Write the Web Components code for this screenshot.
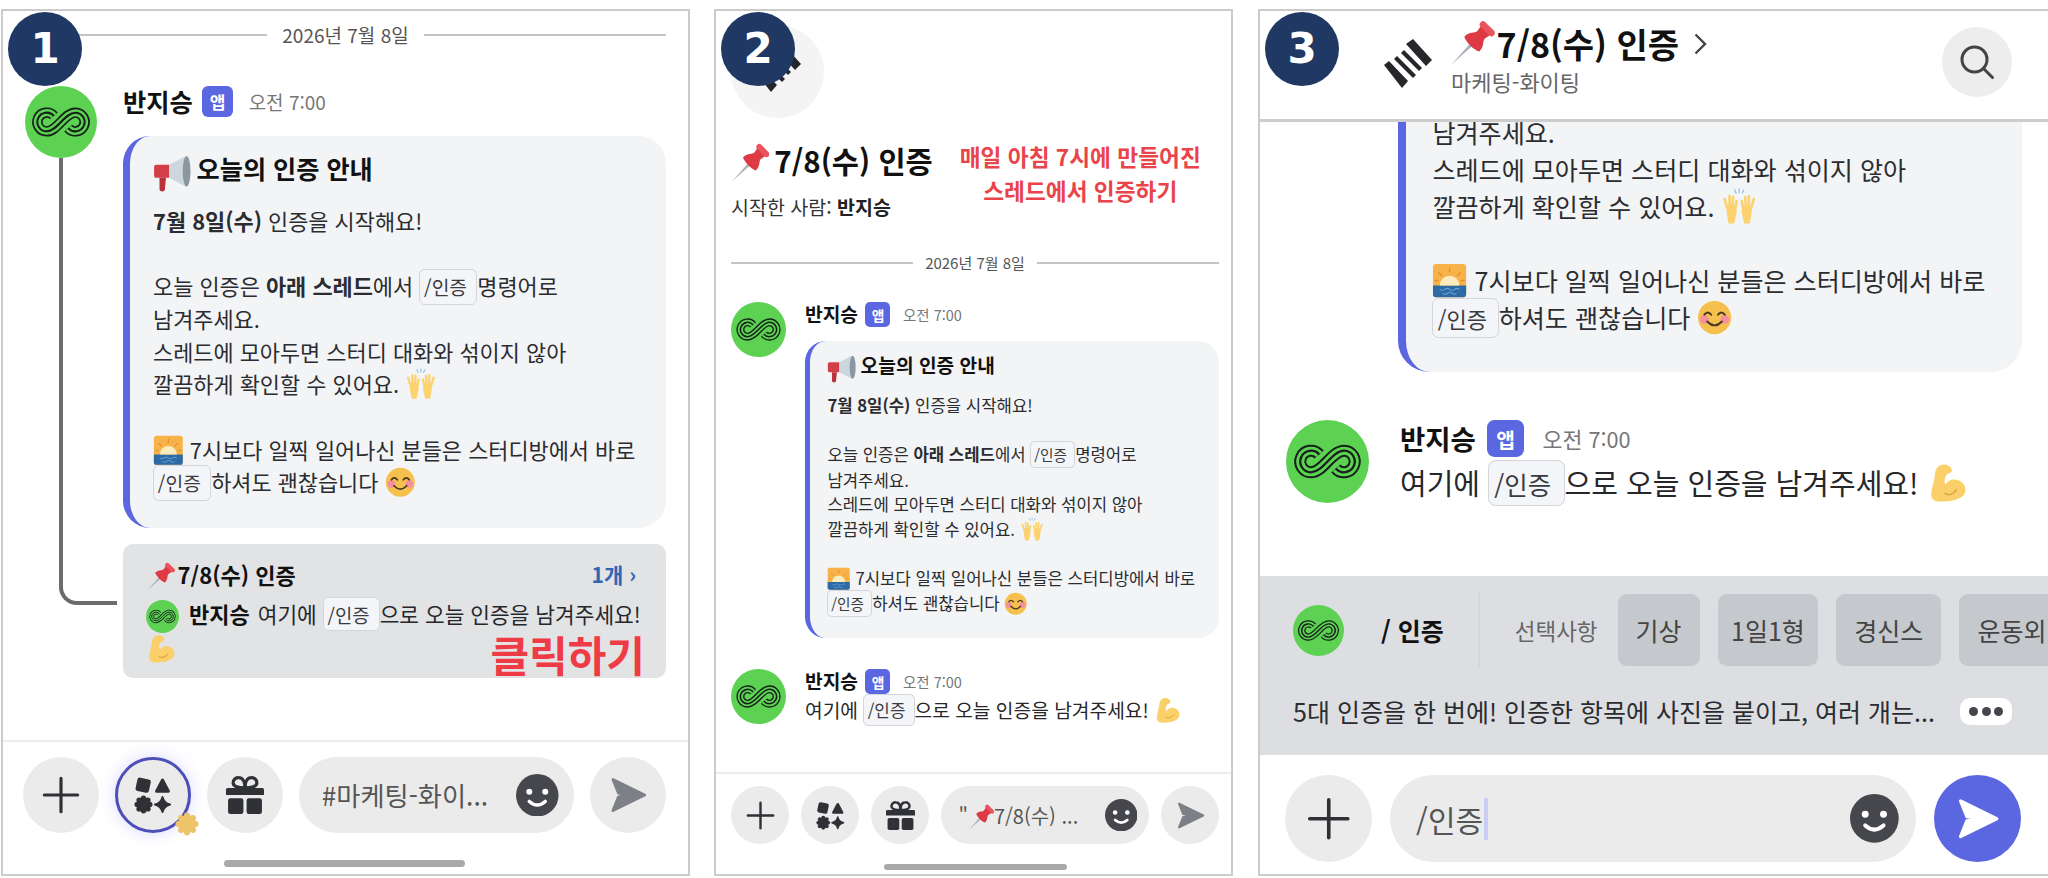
<!DOCTYPE html>
<html lang="ko">
<head>
<meta charset="utf-8">
<title>인증 스레드 안내</title>
<style>
  html, body { margin: 0; background: #fff; }
  body { width: 2048px; height: 878px; overflow: hidden; font-family: "Noto Sans CJK KR", "Noto Sans", sans-serif; }
  guide-board { display: flex; }
</style>
</head>
<body>
<guide-board>
  <phone-panel step="1">
    <chat-area>
      <date-divider>2026년 7월 8일</date-divider>
      <chat-message name="반지승" time="오전 7:00" threaded>
        <notice-card>
          <span slot="title"><emoji-icon name="megaphone"></emoji-icon>오늘의 인증 안내</span>
          <b>7월 8일(수)</b> 인증을 시작해요!<br><br>
          오늘 인증은 <b>아래 스레드</b>에서 <cmd-chip>/인증</cmd-chip> 명령어로<br>
          남겨주세요.<br>
          스레드에 모아두면 스터디 대화와 섞이지 않아<br>
          깔끔하게 확인할 수 있어요. <emoji-icon name="hands"></emoji-icon><br><br>
          <emoji-icon name="sunrise"></emoji-icon> 7시보다 일찍 일어나신 분들은 스터디방에서 바로<br>
          <cmd-chip>/인증</cmd-chip> 하셔도 괜찮습니다 <emoji-icon name="smile"></emoji-icon>
        </notice-card>
        <thread-card title="7/8(수) 인증" count="1개 ›" author="반지승" note="클릭하기">
          여기에 <cmd-chip>/인증</cmd-chip> 으로 오늘 인증을 남겨주세요!<br><emoji-icon name="muscle"></emoji-icon>
        </thread-card>
      </chat-message>
    </chat-area>
    <chat-composer home>
      <round-btn icon="plus"></round-btn>
      <round-btn icon="apps" active></round-btn>
      <round-btn icon="gift"></round-btn>
      <msg-input>#마케팅-화이...</msg-input>
      <round-btn icon="send"></round-btn>
    </chat-composer>
  </phone-panel>

  <phone-panel step="2">
    <chat-area>
      <thread-intro title="7/8(수) 인증" starter="반지승">매일 아침 7시에 만들어진<br>스레드에서 인증하기</thread-intro>
      <date-divider>2026년 7월 8일</date-divider>
      <chat-message name="반지승" time="오전 7:00">
        <notice-card>
          <span slot="title"><emoji-icon name="megaphone"></emoji-icon>오늘의 인증 안내</span>
          <b>7월 8일(수)</b> 인증을 시작해요!<br><br>
          오늘 인증은 <b>아래 스레드</b>에서 <cmd-chip>/인증</cmd-chip> 명령어로<br>
          남겨주세요.<br>
          스레드에 모아두면 스터디 대화와 섞이지 않아<br>
          깔끔하게 확인할 수 있어요. <emoji-icon name="hands"></emoji-icon><br><br>
          <emoji-icon name="sunrise"></emoji-icon> 7시보다 일찍 일어나신 분들은 스터디방에서 바로<br>
          <cmd-chip>/인증</cmd-chip> 하셔도 괜찮습니다 <emoji-icon name="smile"></emoji-icon>
        </notice-card>
      </chat-message>
      <chat-message name="반지승" time="오전 7:00" plain>
        여기에 <cmd-chip>/인증</cmd-chip> 으로 오늘 인증을 남겨주세요! <emoji-icon name="muscle"></emoji-icon>
      </chat-message>
    </chat-area>
    <chat-composer home>
      <round-btn icon="plus"></round-btn>
      <round-btn icon="apps"></round-btn>
      <round-btn icon="gift"></round-btn>
      <msg-input>"<emoji-icon name="pin"></emoji-icon>7/8(수) ...</msg-input>
      <round-btn icon="send"></round-btn>
    </chat-composer>
  </phone-panel>

  <phone-panel step="3">
    <app-header title="7/8(수) 인증" channel="마케팅-화이팅"></app-header>
    <chat-area>
      <notice-card cut>
        남겨주세요.<br>
        스레드에 모아두면 스터디 대화와 섞이지 않아<br>
        깔끔하게 확인할 수 있어요. <emoji-icon name="hands"></emoji-icon><br><br>
        <emoji-icon name="sunrise"></emoji-icon> 7시보다 일찍 일어나신 분들은 스터디방에서 바로<br>
        <cmd-chip>/인증</cmd-chip> 하셔도 괜찮습니다 <emoji-icon name="smile"></emoji-icon>
      </notice-card>
      <chat-message name="반지승" time="오전 7:00" plain>
        여기에 <cmd-chip>/인증</cmd-chip> 으로 오늘 인증을 남겨주세요! <emoji-icon name="muscle"></emoji-icon>
      </chat-message>
    </chat-area>
    <command-tray name="/ 인증" label="선택사항" options="기상,1일1형,경신스,운동외">5대 인증을 한 번에! 인증한 항목에 사진을 붙이고, 여러 개는...</command-tray>
    <chat-composer>
      <round-btn icon="plus"></round-btn>
      <msg-input caret>/인증</msg-input>
      <round-btn icon="send" primary></round-btn>
    </chat-composer>
  </phone-panel>
</guide-board>

<script>
const LOGO_PATH = 'M40 41.5A13 13 0 1 0 30 63C45 63 55 37 70 37A13 13 0 1 1 60 58.5';
const LOGO = `
  <svg viewBox="0 0 100 100" width="100%" height="100%" fill="none">
    <path d="${LOGO_PATH}" stroke="#15201a" stroke-width="14.5"/>
    <path d="${LOGO_PATH}" stroke="#5cd152" stroke-width="9.7"/>
    <path d="${LOGO_PATH}" stroke="#15201a" stroke-width="2.8"/>
  </svg>`;

const SPRING = `
  <svg viewBox="0 0 54 52" width="100%" height="100%" fill="#26272b">
    <path d="M26 6L33 1L52 22L46 28z"/>
    <path d="M21 15L24 12L42 30L39 33z"/>
    <path d="M14 21L17 18L36 37L33 40z"/>
    <path d="M4 27L9 23L28 43L22 50z"/>
  </svg>`;

const EMOJI = {
  megaphone: `<path d="M1 12a2 2 0 0 1 2-2h12v12H3a2 2 0 0 1-2-2z" fill="#d33f49"/>
    <path d="M6 22h6l-1 10a2.5 2.5 0 0 1-5 0z" fill="#b8323c"/>
    <path d="M15 10L30 2v28L15 22z" fill="#ccd6dd"/><ellipse cx="31" cy="16" rx="3.6" ry="14" fill="#8a97a1"/>`,
  pin: `<g transform="translate(23 14) rotate(45)">
      <path d="M-1.2 7L1.2 7L0 28z" fill="#aab2b9"/>
      <path d="M-8 6C-8 0-4-1-4-4L-5-9H5L4-4C4-1 8 0 8 6C4 8-4 8-8 6z" fill="#dd3a44"/>
      <rect x="-7" y="-13" width="14" height="5" rx="2.5" fill="#e8535c"/></g>`,
  hands: `<g stroke="#9ac4e8" stroke-width="1.4" stroke-linecap="round"><path d="M18 1v3.5M13.5 2l1.4 3M22.5 2l-1.4 3"/></g>
    <g stroke="#fbd26e" stroke-width="2.6" stroke-linecap="round" fill="none">
      <path d="M6 19L3.5 11M8.5 18V8M11.5 18L12 9M14 20L15.5 13"/>
      <path d="M30 19L32.5 11M27.5 18V8M24.5 18L24 9M22 20L20.5 13"/></g>
    <path d="M5 17H15L15.5 24L13 35H7.5L6 27z" fill="#fbd26e"/><path d="M31 17H21L20.5 24L23 35H28.5L30 27z" fill="#fbd26e"/>`,
  sunrise: `<rect x="1" y="1" width="34" height="34" rx="3" fill="#f7b34a"/>
    <path d="M1 23H35V32a3 3 0 0 1-3 3H4a3 3 0 0 1-3-3z" fill="#2c6aa5"/>
    <path d="M8 23a10 10 0 0 1 20 0z" fill="#fcebbd"/>
    <g stroke="#e88f2e" stroke-width="1.5" stroke-linecap="round"><path d="M18 5v4M7 10l3 3M29 10l-3 3M3 18h3M33 18h-3"/></g>
    <path d="M8 27q2.5 2 5 0t5 0t5 0t5 0M11 31q2.5 2 5 0t5 0t4 0" stroke="#6ea4d4" stroke-width="1.1" fill="none"/>`,
  smile: `<circle cx="18" cy="18" r="17" fill="#f5c04e"/>
    <circle cx="7.5" cy="20" r="4.5" fill="#f4909e"/><circle cx="28.5" cy="20" r="4.5" fill="#f4909e"/>
    <g stroke="#4a3a25" stroke-width="2" fill="none" stroke-linecap="round">
      <path d="M7.5 15q3.5-4.5 7 0M21.5 15q3.5-4.5 7 0"/><path d="M10.5 22q7.5 8 15 0"/></g>`,
  muscle: `<path d="M12 2C9 3 7 7 7 11C6 18 3 25 4 30C5 34 10 35 16 34C24 34 33 31 34 25C35 18 28 13 21 15C19 16 17 18 16 19C15 15 16 11 19 9C22 9 23 6 21 4C18 1 15 1 12 2z" fill="#fbcf6a"/>
    <path d="M16 27C19 29 23 28 26 24" stroke="#d9a23a" stroke-width="1.3" fill="none" stroke-linecap="round"/>`
};

const ICONS = {
  plus: `<path d="M12 1.5V22.5M1.5 12H22.5" stroke="#2f3136" stroke-width="2" stroke-linecap="round" fill="none"/>`,
  apps: `<g fill="#2f3136">
      <rect x="1.5" y="1.5" width="8.6" height="8.6" rx="1.6" transform="rotate(12 5.8 5.8)"/>
      <path d="M18 2.6L21.7 9.6H14.3z" stroke="#2f3136" stroke-width="2" stroke-linejoin="round"/>
      <circle cx="6" cy="18" r="4.2"/>
      <circle cx="6" cy="14" r="1.7"/><circle cx="6" cy="22" r="1.7"/><circle cx="2" cy="18" r="1.7"/><circle cx="10" cy="18" r="1.7"/>
      <circle cx="3.2" cy="15.2" r="1.7"/><circle cx="8.8" cy="15.2" r="1.7"/><circle cx="3.2" cy="20.8" r="1.7"/><circle cx="8.8" cy="20.8" r="1.7"/>
      <path d="M18 13.2C18.6 15.8 20 17.3 22.8 18C20 18.7 18.6 20.2 18 22.8C17.4 20.2 16 18.7 13.2 18C16 17.3 17.4 15.8 18 13.2z" stroke="#2f3136" stroke-width="1.2" stroke-linejoin="round"/>
    </g>`,
  gift: `<g fill="#2f3136"><path d="M0 8.5a1 1 0 0 1 1-1H23a1 1 0 0 1 1 1V12H0z"/>
      <rect x="1.3" y="14" width="9.7" height="10" rx="1.5"/><rect x="13" y="14" width="9.7" height="10" rx="1.5"/></g>
    <g fill="none" stroke="#2f3136" stroke-width="2"><path d="M12 7.5C8 7.5 4.5 7 4.5 4.3A3.3 3.3 0 0 1 8 1C10.8 1 12 4 12 7.5z"/><path d="M12 7.5C16 7.5 19.5 7 19.5 4.3A3.3 3.3 0 0 0 16 1C13.2 1 12 4 12 7.5z"/></g>`,
  send: `<path d="M2.5 2.2L22.5 12L2.5 21.8L6 13.2L13 12L6 10.8z" fill="currentColor" stroke="currentColor" stroke-width="1.8" stroke-linejoin="round"/>`
};

// Screenshot is three phone captures at different scales, so sizes live in per-step variables
class PhonePanel extends HTMLElement {
  constructor() {
    super();
    this.attachShadow({ mode: 'open' });
    this.shadowRoot.innerHTML = `
      <style>
        :host {
          position: relative;
          display: flex;
          flex-direction: column;
          flex: none;
          box-sizing: border-box;
          height: 867px;
          margin-top: 9px;
          border: 2px solid #cbcbcb;
          overflow: hidden;
          color: #26272b;
          font-family: "Noto Sans CJK KR", "Noto Sans", sans-serif;
        }
        :host([step="1"]) {
          width: 689px; margin-left: 1px;
          --pad-l: 22px; --pad-r: 22px;
          --body: 21.9px; --lh: 32.5px; --msg: 21px;
          --av: 72px; --col-gap: 26px;
          --name: 25.3px; --badge: 31px; --time: 19px; --card-gap: 19px; --bar: 7px;
          --date: 19px; --btn: 76px; --btn-gap: 16px;
          --bar-pad: 15px 22px 0 20px; --home: 241px; --home-top: 27px; --home-h: 7px; --home-b: 7px;
        }
        :host([step="2"]) {
          width: 519px; margin-left: 24px;
          --pad-l: 15px; --pad-r: 12px;
          --body: 16.7px; --lh: 24.6px; --msg: 19.2px;
          --av: 55px; --col-gap: 19px;
          --name: 19.2px; --badge: 25px; --time: 14.5px; --card-gap: 14px; --bar: 5.5px;
          --date: 15px; --btn: 58px; --btn-gap: 12px;
          --bar-pad: 12px 12px 0 15px; --home: 183px; --home-top: 20px; --home-h: 6px; --home-b: 4px;
        }
        :host([step="3"]) {
          width: 790px; margin-left: 25px; border-right: 0;
          --pad-l: 26px; --pad-r: 26px;
          --body: 25.1px; --lh: 37px; --msg: 29px;
          --av: 83px; --col-gap: 31px;
          --name: 27.5px; --badge: 37px; --time: 21.7px; --card-gap: 14px; --bar: 8px;
          --btn: 87px; --btn-gap: 18px;
          --bar-pad: 20px 27px 0 25px;
        }
        .step {
          position: absolute;
          z-index: 5;
          top: 1px;
          left: 5px;
          width: 74px;
          height: 74px;
          border-radius: 50%;
          background: #1f3864;
          color: #fff;
          font: bold 42px/74px "DejaVu Sans", sans-serif;
          text-align: center;
        }
      </style>
      <div class="step">${this.getAttribute('step')}</div>
      <slot></slot>
    `;
  }
}

class ChatArea extends HTMLElement {
  constructor() {
    super();
    this.attachShadow({ mode: 'open' });
    this.shadowRoot.innerHTML = `
      <style>
        :host {
          display: flex;
          flex-direction: column;
          flex: 1;
          min-height: 0;
          padding: 0 var(--pad-r) 0 var(--pad-l);
        }
      </style>
      <slot></slot>
    `;
  }
}

class DateDivider extends HTMLElement {
  constructor() {
    super();
    this.attachShadow({ mode: 'open' });
    this.shadowRoot.innerHTML = `
      <style>
        :host {
          display: flex;
          align-items: center;
          gap: 12px;
          flex: none;
          color: #555;
          font-size: var(--date);
          line-height: 26px;
        }
        :host-context(phone-panel[step="1"]) { margin: 11px 0 38px; gap: 15px; }
        :host-context(phone-panel[step="2"]) { margin: 32px 0 28px; line-height: 22px; }
        i { flex: 1; height: 2px; background: #c4c4c4; }
      </style>
      <i></i><span><slot></slot></span><i></i>
    `;
  }
}

class BotAvatar extends HTMLElement {
  constructor() {
    super();
    this.attachShadow({ mode: 'open' });
    this.shadowRoot.innerHTML = `
      <style>
        :host {
          display: inline-block;
          flex: none;
          width: var(--size, var(--av));
          height: var(--size, var(--av));
          border-radius: 50%;
          background: #5cd152;
          vertical-align: middle;
        }
      </style>
      ${LOGO}
    `;
  }
}

class EmojiIcon extends HTMLElement {
  constructor() {
    super();
    this.attachShadow({ mode: 'open' });
    this.shadowRoot.innerHTML = `
      <style>
        :host {
          display: inline-block;
          width: 1.4em;
          height: 1.4em;
          vertical-align: -0.3em;
        }
        :host([name="megaphone"]) {
          width: 1.55em;
          height: 1.55em;
          margin: -0.2em 0.18em -0.2em 0;
          vertical-align: -0.38em;
        }
        :host([name="pin"]) { margin: -0.1em 0 -0.1em -0.1em; }
        :host([name="hands"]) { width: 1.45em; height: 1.45em; }
        svg { display: block; }
      </style>
      <svg viewBox="0 0 36 36" width="100%" height="100%">${EMOJI[this.getAttribute('name')]}</svg>
    `;
  }
}

class CmdChip extends HTMLElement {
  constructor() {
    super();
    this.attachShadow({ mode: 'open' });
    this.shadowRoot.innerHTML = `
      <style>
        :host {
          display: inline;
          padding: 0.14em 0.2em;
          border: 1px solid #d3d5da;
          border-radius: 0.3em;
          background: #f4f5f8;
          font-size: 0.88em;
          color: #3a3b40;
        }
      </style>
      <slot></slot>
    `;
  }
}

class ChatMessage extends HTMLElement {
  constructor() {
    super();
    this.attachShadow({ mode: 'open' });
    this.shadowRoot.innerHTML = `
      <style>
        :host {
          display: flex;
          gap: var(--col-gap);
          flex: none;
        }
        :host-context(phone-panel[step="2"]):host([plain]) { margin-top: 31px; }
        :host-context(phone-panel[step="3"]):host([plain]) { margin-top: 48px; }
        .side { display: flex; flex-direction: column; flex: none; width: var(--av); }
        .thread-line {
          flex: 1;
          box-sizing: border-box;
          width: 58px;
          margin: 0 0 73px 34px;
          border-left: 4px solid #6c6c6c;
          border-bottom: 4px solid #6c6c6c;
          border-bottom-left-radius: 18px;
        }
        .main { flex: 1; min-width: 0; }
        .head { display: flex; align-items: center; height: var(--badge); }
        .name { font-size: var(--name); font-weight: 700; color: #111; line-height: 1; }
        .badge {
          display: flex;
          align-items: center;
          justify-content: center;
          width: var(--badge);
          height: var(--badge);
          margin: 0 calc(var(--badge) * 0.5) 0 calc(var(--badge) * 0.3);
          border-radius: calc(var(--badge) * 0.2);
          background: #5a67e0;
          color: #fff;
          font-size: calc(var(--badge) * 0.55);
          font-weight: 700;
        }
        .time { font-size: var(--time); color: #777; }
        .body { margin-top: var(--card-gap); }
        :host([plain]) .body {
          margin-top: calc(var(--msg) * 0.12);
          font-size: var(--msg);
          line-height: 1.45;
          white-space: nowrap;
        }
      </style>
      <div class="side">
        <bot-avatar></bot-avatar>
        ${this.hasAttribute('threaded') ? '<div class="thread-line"></div>' : ''}
      </div>
      <div class="main">
        <div class="head">
          <span class="name">${this.getAttribute('name')}</span>
          <span class="badge">앱</span>
          <span class="time">${this.getAttribute('time')}</span>
        </div>
        <div class="body"><slot></slot></div>
      </div>
    `;
  }
}

class NoticeCard extends HTMLElement {
  constructor() {
    super();
    this.attachShadow({ mode: 'open' });
    this.shadowRoot.innerHTML = `
      <style>
        :host {
          display: block;
          flex: none;
          box-sizing: border-box;
          padding: 0.72em 1em 1.3em calc(1.37em - var(--bar));
          border-left: var(--bar) solid #5a67e0;
          border-radius: 1.25em;
          background: #f3f4f6;
          font-size: var(--body);
          line-height: var(--lh);
          white-space: nowrap;
          color: #2b2c30;
        }
        :host([cut]) {
          margin: -8px 0 0 calc(var(--av) + var(--col-gap) - 2px);
          padding: 0 1em 1.4em calc(1.37em - var(--bar));
          border-top-left-radius: 0;
          border-top-right-radius: 0;
        }
        .title {
          margin-bottom: 0.66em;
          font-size: 1.15em;
          font-weight: 700;
          color: #111;
        }
        :host([cut]) .title { display: none; }
      </style>
      <div class="title"><slot name="title"></slot></div>
      <slot></slot>
    `;
  }
}

class ThreadCard extends HTMLElement {
  constructor() {
    super();
    this.attachShadow({ mode: 'open' });
    this.shadowRoot.innerHTML = `
      <style>
        :host {
          position: relative;
          display: block;
          margin-top: 16px;
          padding: 15px 30px 12px 23px;
          border-radius: 10px;
          background: #e2e3e5;
          font-size: 21.4px;
          line-height: 34px;
          white-space: nowrap;
        }
        .head { display: flex; justify-content: space-between; margin-bottom: 5px; font-size: 22px; line-height: 30px; font-weight: 700; color: #111; }
        .count { color: #2f66b5; font-size: 21px; }
        .head emoji-icon { margin-right: 3px; }
        .text { display: block; }
        bot-avatar { --size: 33px; margin: -4px 10px -4px 0; }
        b { margin-right: 2px; font-size: 22px; color: #111; }
        .note {
          position: absolute;
          right: 21px;
          bottom: 2px;
          color: #ee3b45;
          font-size: 42px;
          line-height: 44px;
          font-weight: 700;
        }
      </style>
      <div class="head">
        <span><emoji-icon name="pin"></emoji-icon>${this.getAttribute('title')}</span>
        <span class="count">${this.getAttribute('count')}</span>
      </div>
      <div class="text"><bot-avatar></bot-avatar><b>${this.getAttribute('author')}</b><slot></slot></div>
      <div class="note">${this.getAttribute('note')}</div>
    `;
  }
}

class ThreadIntro extends HTMLElement {
  constructor() {
    super();
    this.attachShadow({ mode: 'open' });
    this.shadowRoot.innerHTML = `
      <style>
        :host { display: block; flex: none; padding-top: 14px; }
        .disc {
          position: relative;
          width: 93px;
          height: 93px;
          border-radius: 50%;
          background: #f4f4f4;
        }
        .spring { position: absolute; left: 18px; top: 17px; width: 54px; height: 52px; }
        .row { display: flex; gap: 27px; margin-top: 20px; }
        h1 { margin: 0; font-size: 29.5px; line-height: 44px; font-weight: 700; color: #111; white-space: nowrap; }
        h1 emoji-icon { margin-right: 5px; }
        p { margin: 12px 0 0; font-size: 19.5px; line-height: 26px; color: #333; }
        p b { color: #222; font-weight: 700; }
        .note {
          margin-top: 2px;
          color: #e8444a;
          font-size: 22.7px;
          line-height: 34px;
          font-weight: 700;
          text-align: center;
          white-space: nowrap;
        }
      </style>
      <div class="disc"><div class="spring">${SPRING}</div></div>
      <div class="row">
        <div>
          <h1><emoji-icon name="pin"></emoji-icon>${this.getAttribute('title')}</h1>
          <p>시작한 사람: <b>${this.getAttribute('starter')}</b></p>
        </div>
        <div class="note"><slot></slot></div>
      </div>
    `;
  }
}

class AppHeader extends HTMLElement {
  constructor() {
    super();
    this.attachShadow({ mode: 'open' });
    this.shadowRoot.innerHTML = `
      <style>
        :host {
          position: relative;
          z-index: 2;
          display: flex;
          flex: none;
          box-sizing: border-box;
          height: 111px;
          padding: 11px 36px 0 120px;
          border-bottom: 3px solid #cdcdcd;
          background: #fff;
        }
        .spring { flex: none; width: 54px; height: 52px; margin: 16px 17px 0 0; }
        .titles { flex: 1; }
        h1 {
          display: flex;
          align-items: center;
          margin: 0;
          font-size: 34px;
          line-height: 44px;
          font-weight: 700;
          color: #111;
        }
        emoji-icon { margin-right: 2px; margin-left: -4px; }
        svg.chev { margin-left: 15px; }
        p { margin: 0; font-size: 22px; line-height: 30px; color: #666; }
        .search {
          display: flex;
          align-items: center;
          justify-content: center;
          flex: none;
          width: 70px;
          height: 70px;
          margin-top: 5px;
          border-radius: 50%;
          background: #ededed;
        }
      </style>
      <div class="spring">${SPRING}</div>
      <div class="titles">
        <h1><emoji-icon name="pin"></emoji-icon>${this.getAttribute('title')}
          <svg class="chev" width="13" height="22" viewBox="0 0 13 22" fill="none" stroke="#444" stroke-width="2.4"><path d="M1.5 1.5L11 11L1.5 20.5"/></svg>
        </h1>
        <p>${this.getAttribute('channel')}</p>
      </div>
      <div class="search">
        <svg width="36" height="36" viewBox="0 0 36 36" fill="none" stroke="#444" stroke-width="3" stroke-linecap="round"><circle cx="15.5" cy="15.5" r="12.5"/><path d="M25 25L33.5 33.5"/></svg>
      </div>
    `;
  }
}

class CommandTray extends HTMLElement {
  constructor() {
    super();
    this.attachShadow({ mode: 'open' });
    const chips = this.getAttribute('options').split(',').map(o => `<span class="chip">${o}</span>`).join('');
    this.shadowRoot.innerHTML = `
      <style>
        :host {
          display: block;
          flex: none;
          height: 179px;
          box-sizing: border-box;
          padding: 18px 0 0 33px;
          background: #dcdee1;
          overflow: hidden;
        }
        .top { display: flex; align-items: center; height: 72px; white-space: nowrap; }
        bot-avatar { --size: 51px; margin-right: 37px; }
        .name { width: 66px; font-size: 25px; font-weight: 700; color: #111; }
        .sep { flex: none; width: 2px; height: 78px; margin: 0 35px 0 34px; background: #d4d6d9; }
        .label { flex: none; margin-right: 20px; font-size: 22.5px; color: #666; }
        .chip {
          display: flex;
          align-items: center;
          flex: none;
          height: 72px;
          margin-right: 18px;
          padding: 0 18px;
          border-radius: 9px;
          background: #c5c8cc;
          font-size: 25px;
          color: #444;
        }
        .chip:nth-of-type(5) { padding: 0 13.5px; }
        .desc { display: flex; align-items: center; justify-content: space-between; margin-top: 27px; padding-right: 36px; font-size: 25px; line-height: 36px; color: #2b2c30; white-space: nowrap; }
        .more {
          display: flex;
          align-items: center;
          justify-content: center;
          gap: 3.5px;
          flex: none;
          width: 52px;
          height: 27px;
          border-radius: 10px;
          background: #fff;
        }
        .more i { width: 9px; height: 9px; border-radius: 50%; background: #44464b; }
      </style>
      <div class="top">
        <bot-avatar></bot-avatar>
        <span class="name">${this.getAttribute('name')}</span>
        <span class="sep"></span>
        <span class="label">${this.getAttribute('label')}</span>
        ${chips}
      </div>
      <div class="desc"><span><slot></slot></span><span class="more"><i></i><i></i><i></i></span></div>
    `;
  }
}

class ChatComposer extends HTMLElement {
  constructor() {
    super();
    this.attachShadow({ mode: 'open' });
    this.shadowRoot.innerHTML = `
      <style>
        :host {
          display: block;
          flex: none;
          padding: var(--bar-pad);
        }
        :host([home]) { border-top: 2px solid #ececec; }
        .row { display: flex; gap: var(--btn-gap); }
        .home {
          width: var(--home);
          height: var(--home-h);
          margin: var(--home-top) auto var(--home-b);
          border-radius: 4px;
          background: #a9a9a9;
        }
        :host(:not([home])) .row { margin-bottom: 12px; }
      </style>
      <div class="row"><slot></slot></div>
      ${this.hasAttribute('home') ? '<div class="home"></div>' : ''}
    `;
  }
}

class RoundBtn extends HTMLElement {
  constructor() {
    super();
    this.attachShadow({ mode: 'open' });
    this.shadowRoot.innerHTML = `
      <style>
        :host {
          position: relative;
          display: flex;
          align-items: center;
          justify-content: center;
          flex: none;
          box-sizing: border-box;
          width: var(--btn);
          height: var(--btn);
          border-radius: 50%;
          background: #ebebeb;
          color: #7d8087;
        }
        :host([primary]) { background: #5a67e0; color: #fff; }
        :host([active]) {
          border: 3px solid #4d4fb8;
          box-shadow: 0 0 16px rgba(140, 130, 255, 0.32);
        }
        svg.icon { width: calc(var(--btn) * 0.5); height: calc(var(--btn) * 0.5); }
        .spark { position: absolute; right: -11px; bottom: -6px; width: 24px; height: 24px; }
      </style>
      <svg class="icon" viewBox="0 0 24 24">${ICONS[this.getAttribute('icon')]}</svg>
      ${this.hasAttribute('active') ? `<svg class="spark" viewBox="0 0 24 24"><g fill="#eec46a"><circle cx="12" cy="12" r="9"/><circle cx="12" cy="3.5" r="3"/><circle cx="12" cy="20.5" r="3"/><circle cx="3.5" cy="12" r="3"/><circle cx="20.5" cy="12" r="3"/><circle cx="6" cy="6" r="3"/><circle cx="18" cy="6" r="3"/><circle cx="6" cy="18" r="3"/><circle cx="18" cy="18" r="3"/></g></svg>` : ''}
    `;
  }
}

class MsgInput extends HTMLElement {
  constructor() {
    super();
    this.attachShadow({ mode: 'open' });
    this.shadowRoot.innerHTML = `
      <style>
        :host {
          display: flex;
          align-items: center;
          flex: 1;
          min-width: 0;
          height: var(--btn);
          padding: 0 calc(var(--btn) * 0.2) 0 calc(var(--btn) * 0.3);
          border-radius: calc(var(--btn) / 2);
          background: #ebebeb;
          color: #555;
          font-size: calc(var(--btn) * 0.345);
          white-space: nowrap;
        }
        .text { flex: 1; display: flex; align-items: center; }
        .caret { width: 4px; height: 42px; margin-left: 1px; background: #c9ccf3; }
        .smile { flex: none; width: calc(var(--btn) * 0.56); height: calc(var(--btn) * 0.56); }
      </style>
      <span class="text"><span><slot></slot></span>${this.hasAttribute('caret') ? '<span class="caret"></span>' : ''}</span>
      <svg class="smile" viewBox="0 0 24 24"><circle cx="12" cy="12" r="12" fill="#45474c"/><circle cx="7.5" cy="10" r="1.7" fill="#fff"/><circle cx="16.5" cy="10" r="1.7" fill="#fff"/><path d="M7.5 15.5q4.5 4 9 0" stroke="#fff" stroke-width="2" stroke-linecap="round" fill="none"/></svg>
    `;
  }
}

customElements.define('phone-panel', PhonePanel);
customElements.define('chat-area', ChatArea);
customElements.define('date-divider', DateDivider);
customElements.define('bot-avatar', BotAvatar);
customElements.define('emoji-icon', EmojiIcon);
customElements.define('cmd-chip', CmdChip);
customElements.define('chat-message', ChatMessage);
customElements.define('notice-card', NoticeCard);
customElements.define('thread-card', ThreadCard);
customElements.define('thread-intro', ThreadIntro);
customElements.define('app-header', AppHeader);
customElements.define('command-tray', CommandTray);
customElements.define('chat-composer', ChatComposer);
customElements.define('round-btn', RoundBtn);
customElements.define('msg-input', MsgInput);
</script>
</body>
</html>
